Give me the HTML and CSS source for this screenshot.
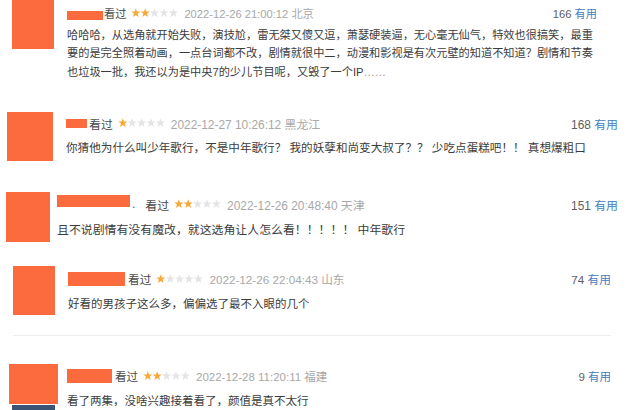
FILE: index.html
```html
<!DOCTYPE html>
<html lang="zh-CN">
<head>
<meta charset="utf-8">
<title>短评</title>
<link rel="stylesheet" href="styles.css">
</head>
<body>
<svg class="defs" aria-hidden="true">
  <symbol id="star" viewBox="-4.8 -5 9.6 9.6">
    <polygon points="0,-4.8 1.18,-1.62 4.57,-1.48 1.9,0.62 2.82,3.88 0,2 -2.82,3.88 -1.9,0.62 -4.57,-1.48 -1.18,-1.62"/>
  </symbol>
</svg>

<div class="list">
  <div class="card c1">
    <div class="avatar-col"><div class="avatar"></div></div>
    <div class="main">
      <div class="head">
        <span class="name"></span>
        <span class="status">看过</span>
        <svg class="stars" viewBox="0 0 47 10">
          <use href="#star" x="0" y="0" width="9.6" height="9.6" class="on"/>
          <use href="#star" x="9.4" y="0" width="9.6" height="9.6" class="on"/>
          <use href="#star" x="18.8" y="0" width="9.6" height="9.6" class="off"/>
          <use href="#star" x="28.2" y="0" width="9.6" height="9.6" class="off"/>
          <use href="#star" x="37.6" y="0" width="9.6" height="9.6" class="off"/>
        </svg>
        <span class="time">2022-12-26 21:00:12 北京</span>
        <span class="votes">166 <span class="useful">有用</span></span>
      </div>
      <p class="text">哈哈哈，从选角就开始失败，演技尬，雷无桀又傻又逗，萧瑟硬装逼，无心毫无仙气，特效也很搞笑，最重<br>要的是完全照着动画，一点台词都不改，剧情就很中二，动漫和影视是有次元壁的知道不知道？剧情和节奏<br>也垃圾一批，我还以为是中央7的少儿节目呢，又毁了一个IP<span class="dots">……</span></p>
    </div>
  </div>

  <div class="card c2">
    <div class="avatar-col"><div class="avatar"></div></div>
    <div class="main">
      <div class="head">
        <span class="name"></span>
        <span class="status">看过</span>
        <svg class="stars" viewBox="0 0 47 10">
          <use href="#star" x="0" y="0" width="9.6" height="9.6" class="on"/>
          <use href="#star" x="9.4" y="0" width="9.6" height="9.6" class="off"/>
          <use href="#star" x="18.8" y="0" width="9.6" height="9.6" class="off"/>
          <use href="#star" x="28.2" y="0" width="9.6" height="9.6" class="off"/>
          <use href="#star" x="37.6" y="0" width="9.6" height="9.6" class="off"/>
        </svg>
        <span class="time">2022-12-27 10:26:12 黑龙江</span>
        <span class="votes">168 <span class="useful">有用</span></span>
      </div>
      <p class="text">你猜他为什么叫少年歌行，不是中年歌行？ 我的妖孽和尚变大叔了？？ 少吃点蛋糕吧！！ 真想爆粗口</p>
    </div>
  </div>

  <div class="card c3">
    <div class="avatar-col"><div class="avatar"></div></div>
    <div class="main">
      <div class="head">
        <span class="name"></span>
        <span class="dot">.</span>
        <span class="status">看过</span>
        <svg class="stars" viewBox="0 0 47 10">
          <use href="#star" x="0" y="0" width="9.6" height="9.6" class="on"/>
          <use href="#star" x="9.4" y="0" width="9.6" height="9.6" class="on"/>
          <use href="#star" x="18.8" y="0" width="9.6" height="9.6" class="off"/>
          <use href="#star" x="28.2" y="0" width="9.6" height="9.6" class="off"/>
          <use href="#star" x="37.6" y="0" width="9.6" height="9.6" class="off"/>
        </svg>
        <span class="time">2022-12-26 20:48:40 天津</span>
        <span class="votes">151 <span class="useful">有用</span></span>
      </div>
      <p class="text">且不说剧情有没有魔改，就这选角让人怎么看！！！！！ 中年歌行</p>
    </div>
  </div>

  <div class="card c4">
    <div class="avatar-col"><div class="avatar"></div></div>
    <div class="main">
      <div class="head">
        <span class="name"></span>
        <span class="status">看过</span>
        <svg class="stars" viewBox="0 0 47 10">
          <use href="#star" x="0" y="0" width="9.6" height="9.6" class="on"/>
          <use href="#star" x="9.4" y="0" width="9.6" height="9.6" class="off"/>
          <use href="#star" x="18.8" y="0" width="9.6" height="9.6" class="off"/>
          <use href="#star" x="28.2" y="0" width="9.6" height="9.6" class="off"/>
          <use href="#star" x="37.6" y="0" width="9.6" height="9.6" class="off"/>
        </svg>
        <span class="time">2022-12-26 22:04:43 山东</span>
        <span class="votes">74 <span class="useful">有用</span></span>
      </div>
      <p class="text">好看的男孩子这么多，偏偏选了最不入眼的几个</p>
    </div>
  </div>

  <div class="card c5">
    <div class="avatar-col">
      <div class="avatar"></div>
      <div class="below"></div>
    </div>
    <div class="main">
      <div class="head">
        <span class="name"></span>
        <span class="status">看过</span>
        <svg class="stars" viewBox="0 0 47 10">
          <use href="#star" x="0" y="0" width="9.6" height="9.6" class="on"/>
          <use href="#star" x="9.4" y="0" width="9.6" height="9.6" class="on"/>
          <use href="#star" x="18.8" y="0" width="9.6" height="9.6" class="off"/>
          <use href="#star" x="28.2" y="0" width="9.6" height="9.6" class="off"/>
          <use href="#star" x="37.6" y="0" width="9.6" height="9.6" class="off"/>
        </svg>
        <span class="time">2022-12-28 11:20:11 福建</span>
        <span class="votes">9 <span class="useful">有用</span></span>
      </div>
      <p class="text">看了两集，没啥兴趣接着看了，颜值是真不太行</p>
    </div>
  </div>
</div>
</body>
</html>
```

FILE: styles.css
```css
* { box-sizing: border-box; }

html, body {
  margin: 0;
  padding: 0;
  background: #fff;
}

body {
  width: 640px;
  height: 410px;
  overflow: hidden;
  font-family: "Liberation Sans", "Noto Sans CJK SC", sans-serif;
  color: #3c3c3c;
}

.defs {
  position: absolute;
  width: 0;
  height: 0;
  overflow: hidden;
}

.list {
  display: flex;
  flex-direction: column;
}

.card {
  display: flex;
  align-items: flex-start;
  flex: none;
  height: var(--h);
  padding-left: var(--pl);
  padding-right: var(--pr);
  font-size: var(--fs);
}

.avatar-col {
  display: flex;
  flex-direction: column;
  flex: none;
  width: var(--aw);
}

.avatar {
  width: var(--aw);
  height: var(--ah);
  background: #fb6b3e;
}

.main {
  flex: 1;
  min-width: 0;
  margin-left: var(--gap);
}

.head {
  display: flex;
  align-items: center;
  height: 20px;
  margin-top: var(--ht);
  white-space: nowrap;
}

.name {
  flex: none;
  width: var(--nw);
  height: var(--nh);
  margin-top: var(--nm, 0);
  background: #fb6b3e;
}

.dot {
  margin-left: 2px;
  color: #555;
}

.status {
  margin-left: var(--sg);
  color: #4a4a4a;
}

.stars {
  flex: none;
  width: 47px;
  height: 10px;
  margin-left: 5px;
}

.stars .on { fill: #f8a935; }
.stars .off { fill: #e4e4e4; }

.time {
  margin-left: 6px;
  color: #a8a8a8;
}

.votes {
  margin-left: auto;
  color: #5e5e5e;
}

.useful {
  color: #3f80c2;
}

.text {
  margin: var(--tg) 0 0;
  font-size: var(--tfs, var(--fs));
  line-height: var(--lh);
  white-space: nowrap;
}

.dots {
  color: #999;
}

.c1 {
  --h: 112px; --pl: 12px; --pr: 43px; --fs: 11.2px;
  --aw: 42px; --ah: 49px; --gap: 13px; --ht: 3px;
  --nw: 36px; --nh: 9px; --nm: 4px; --sg: 1px;
  --tg: 3px; --lh: 18.3px;
}

.c2 {
  --h: 80px; --pl: 7px; --pr: 22px; --fs: 11.9px; --tfs: 11.6px;
  --aw: 46px; --ah: 49px; --gap: 13px; --ht: 1px;
  --nw: 21px; --nh: 9px; --sg: 2px;
  --tg: 5px; --lh: 20px;
}

.c3 {
  --h: 74px; --pl: 6px; --pr: 22px; --fs: 11.9px;
  --aw: 44px; --ah: 50px; --gap: 7px; --ht: 2px;
  --nw: 73px; --nh: 12px; --nm: -6px; --sg: 10px;
  --tg: 6px; --lh: 20px;
}

.c4 {
  --h: 70px; --pl: 0px; --pr: 0px; --fs: 11.7px; --tfs: 11.5px;
  --aw: 42px; --ah: 49px; --gap: 13px; --ht: 2.5px;
  --nw: 57px; --nh: 14px; --sg: 3px;
  --tg: 5px; --lh: 20px;
  margin: 0 29px 0 13px;
  border-bottom: 1px solid #eee;
}

.c5 {
  --h: 46px; --pl: 9px; --pr: 29px; --fs: 11.5px;
  --aw: 49px; --ah: 40px; --gap: 9px; --ht: 2px;
  --nw: 45px; --nh: 14px; --sg: 3px;
  --tg: 5px; --lh: 20px;
  margin-top: 28px;
}

.below {
  width: 43px;
  height: 8px;
  margin: 1px 0 0 3px;
  background: #3b5375;
}
```
